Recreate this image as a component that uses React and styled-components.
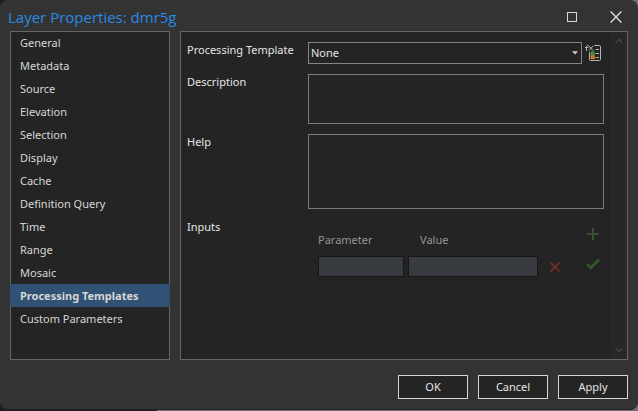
import React, { useState } from "react";
import styled, { createGlobalStyle } from "styled-components";

const GlobalStyle = createGlobalStyle`
  *, *::before, *::after { box-sizing: border-box; }
  body {
    margin: 0;
    background: linear-gradient(to right, #201d20 157px, #757171 157px);
    font-family: "Noto Sans", "Open Sans", sans-serif;
    font-size: 11px;
    line-height: 16px;
    color: #e4e4e4;
  }
  button, input, select, textarea { font: inherit; color: inherit; border-radius: 0; }
`;

const Screen = styled.div`
  min-height: 100vh;
  display: flex;
  padding-bottom: 1px;
`;

const Dialog = styled.section`
  flex: 1;
  min-width: 0;
  display: flex;
  flex-direction: column;
  background: #333333;
  border-bottom: 1px solid #222222;
  border-radius: 8px;
`;

const TitleBar = styled.header`
  height: 31px;
  flex: none;
  display: flex;
  align-items: center;
  justify-content: space-between;
  padding: 2px 4px 0 8px;
`;

const Title = styled.h1`
  margin: 0;
  font-family: "Open Sans", "Noto Sans", sans-serif;
  font-size: 15px;
  line-height: 20px;
  font-weight: 400;
  color: #2a8ae6;
`;

const WindowControls = styled.div`
  display: flex;
  gap: 12px;
`;

const IconButton = styled.button`
  width: ${(p) => p.$width}px;
  height: ${(p) => p.$height}px;
  display: flex;
  align-items: center;
  justify-content: center;
  padding: 0;
  border: 0;
  background: none;
  color: ${(p) => p.$color || "#d8d8d8"};
`;

const Body = styled.div`
  flex: 1;
  display: grid;
  grid-template-columns: 160px minmax(0, 1fr);
  gap: 10px;
  padding: 0 10px;
`;

const Nav = styled.nav`
  background: #242424;
  border: 1px solid #666666;
`;

const NavList = styled.ul`
  list-style: none;
  margin: -1px;
  padding: 0;
`;

const NavItem = styled.button`
  display: block;
  width: 100%;
  height: 23px;
  padding: 0 10px;
  border: 0;
  text-align: left;
  color: #d6d6d6;
  background: ${(p) => (p.$active ? "#2f5275" : "transparent")};
  font-weight: ${(p) => (p.$active ? 700 : 400)};
`;

const Panel = styled.div`
  display: grid;
  grid-template-columns: minmax(0, 1fr) 17px;
  background: #242424;
  border: 1px solid #666666;
`;

const Form = styled.form`
  display: grid;
  grid-template-columns: 111px minmax(0, 1fr);
  grid-auto-rows: max-content;
  gap: 10px;
  padding: 10px 6px;
`;

const Label = styled.label`
  white-space: nowrap;
`;

const PickerRow = styled.div`
  display: grid;
  grid-template-columns: minmax(0, 1fr) 22px;
`;

const Picker = styled.div`
  display: grid;
  align-items: center;

  > * { grid-area: 1 / 1; }
  > svg { justify-self: end; margin-right: 4px; pointer-events: none; }
`;

const Select = styled.select`
  appearance: none;
  width: 100%;
  height: 22px;
  padding: 0 2px;
  border: 1px solid #858585;
  background: #242424;
`;

const TextArea = styled.textarea`
  display: block;
  width: 100%;
  height: ${(p) => p.$height}px;
  resize: none;
  padding: 2px;
  border: 1px solid #7c7c7c;
  background: #242424;
`;

const Inputs = styled.div`
  display: grid;
  grid-template-columns: 86px minmax(0, 1fr) 36px 22px;
  grid-template-rows: 33px 21px;
  gap: 4px;
  padding-left: 10px;
`;

const ColumnLabel = styled.label`
  grid-column: ${(p) => p.$column};
  align-self: end;
  padding: 0 0 4px ${(p) => p.$indent || 0}px;
  color: #969696;
`;

const ColumnAction = styled.div`
  grid-column: 4;
  padding-top: 4px;
`;

const CellInput = styled.input`
  width: 100%;
  min-width: 0;
  height: 21px;
  padding: 0 4px;
  border: 1px solid #171717;
  background: #383b3f;
`;

const ScrollRail = styled.div`
  display: flex;
  flex-direction: column;
  align-items: center;
  justify-content: space-between;
  background: #272727;
  padding: 6px 0;
  color: #484848;
`;

const Footer = styled.footer`
  display: flex;
  justify-content: flex-end;
  gap: 10px;
  padding: 15px 10px 10px;
`;

const ActionButton = styled.button`
  width: 70px;
  height: 24px;
  padding: 0;
  border: 1px solid #d6d6d6;
  background: #242424;
`;

const sections = [
  "General", "Metadata", "Source", "Elevation", "Selection", "Display", "Cache",
  "Definition Query", "Time", "Range", "Mosaic", "Processing Templates", "Custom Parameters",
];

const MaximizeIcon = () => (
  <svg width="10" height="10" viewBox="0 0 10 10" fill="none" stroke="currentColor" aria-hidden="true">
    <rect x="0.5" y="0.5" width="9" height="9" />
  </svg>
);

const CrossIcon = ({ size, weight }) => (
  <svg width={size} height={size} viewBox="0 0 10 10" fill="none" stroke="currentColor" strokeWidth={weight} aria-hidden="true">
    <path d="M0.5 0.5 9.5 9.5M9.5 0.5 0.5 9.5" />
  </svg>
);

const PlusIcon = () => (
  <svg width="12" height="12" viewBox="0 0 12 12" fill="none" stroke="currentColor" strokeWidth="2" aria-hidden="true">
    <path d="M6 0V12M0 6H12" />
  </svg>
);

const CheckIcon = () => (
  <svg width="14" height="12" viewBox="0 0 14 12" fill="none" stroke="currentColor" strokeWidth="2.8" aria-hidden="true">
    <path d="M1 6.3 4.8 9.8 13 1.5" />
  </svg>
);

const ChevronIcon = ({ up }) => (
  <svg width="8" height="6" viewBox="0 0 8 6" fill="none" stroke="currentColor" strokeWidth="1.3" aria-hidden="true">
    <path d={up ? "M1 4.5 4 1.5 7 4.5" : "M1 1.5 4 4.5 7 1.5"} />
  </svg>
);

const CaretIcon = () => (
  <svg width="6" height="4" viewBox="0 0 6 4" fill="#d0d0d0" aria-hidden="true">
    <path d="M0 0.300h6L3 3.500z" />
  </svg>
);

const TemplateIcon = () => (
  <svg width="16" height="16" viewBox="0 0 16 16" fill="none" stroke="#b4b4b4" aria-hidden="true">
    <path d="M3.5 0.5H2.7Q1.5 0.5 1.5 1.7V6M0 2.5H3.5M4 1 8 5.5M8 1 4 5.5" />
    <path d="M9 0.5H14.5Q15.5 0.5 15.5 1.5V14.5Q15.5 15.5 14.5 15.5H5.5Q4.5 15.5 4.5 14.5V7" />
    <path d="M10.5 4.5H14M10.5 8.5H14M10.5 12.5H14" />
    <rect x="6.5" y="7" width="2.400" height="2.400" stroke="#43a047" strokeWidth="1.4" />
    <rect x="6.5" y="11" width="2.400" height="2.400" stroke="#f28c28" strokeWidth="1.4" />
  </svg>
);

export default function App() {
  const [active, setActive] = useState("Processing Templates");
  return (
    <>
      <GlobalStyle />
      <Screen>
        <Dialog role="dialog" aria-labelledby="dialog-title">
          <TitleBar>
            <Title id="dialog-title">Layer Properties: dmr5g</Title>
            <WindowControls>
              <IconButton type="button" $width={28} $height={24} aria-label="Maximize"><MaximizeIcon /></IconButton>
              <IconButton type="button" $width={36} $height={24} aria-label="Close"><CrossIcon size={12} weight={1.2} /></IconButton>
            </WindowControls>
          </TitleBar>
          <Body>
            <Nav aria-label="Layer properties">
              <NavList>
                {sections.map((name) => (
                  <li key={name}>
                    <NavItem
                      type="button"
                      $active={name === active}
                      aria-current={name === active ? "page" : undefined}
                      onClick={() => setActive(name)}
                    >
                      {name}
                    </NavItem>
                  </li>
                ))}
              </NavList>
            </Nav>
            <Panel>
              <Form>
                <Label htmlFor="template">Processing Template</Label>
                <PickerRow>
                  <Picker>
                    <Select id="template"><option>None</option></Select>
                    <CaretIcon />
                  </Picker>
                  <IconButton type="button" $width={22} $height={22} aria-label="Edit template"><TemplateIcon /></IconButton>
                </PickerRow>
                <Label htmlFor="description">Description</Label>
                <TextArea id="description" $height={50} />
                <Label htmlFor="help">Help</Label>
                <TextArea id="help" $height={75} />
                <Label as="span">Inputs</Label>
                <Inputs>
                  <ColumnLabel $column={1} htmlFor="parameter">Parameter</ColumnLabel>
                  <ColumnLabel $column={2} $indent={12} htmlFor="value">Value</ColumnLabel>
                  <ColumnAction>
                    <IconButton type="button" $width={22} $height={22} $color="#35552f" aria-label="Add input"><PlusIcon /></IconButton>
                  </ColumnAction>
                  <CellInput id="parameter" />
                  <CellInput id="value" />
                  <IconButton type="button" $width={26} $height={21} $color="#6b3022" aria-label="Remove input"><CrossIcon size={10} weight={2} /></IconButton>
                  <IconButton type="button" $width={22} $height={16} $color="#35552f" aria-label="Confirm input"><CheckIcon /></IconButton>
                </Inputs>
              </Form>
              <ScrollRail>
                <ChevronIcon up />
                <ChevronIcon />
              </ScrollRail>
            </Panel>
          </Body>
          <Footer>
            <ActionButton type="button">OK</ActionButton>
            <ActionButton type="button">Cancel</ActionButton>
            <ActionButton type="button">Apply</ActionButton>
          </Footer>
        </Dialog>
      </Screen>
    </>
  );
}
